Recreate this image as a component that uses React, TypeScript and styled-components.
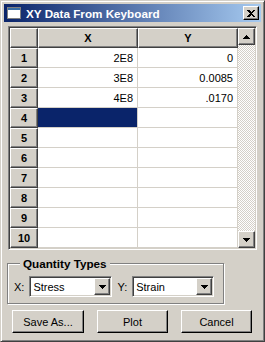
import React from 'react';
import styled, { createGlobalStyle, css } from 'styled-components';

const FACE = '#d4d0c8';
const SHADOW = '#808080';
const DARK = '#404040';
const NAVY = '#0a246a';

const Global = createGlobalStyle`
  html, body { margin: 0; padding: 0; background: ${FACE}; }
  body { font-family: "Liberation Sans", Arial, sans-serif; font-size: 11px; color: #000; }
  * { box-sizing: border-box; }
`;

const raised = (outer: string) => css`
  background: ${FACE};
  border: 1px solid;
  border-color: #fff ${outer} ${outer} #fff;
  box-shadow: inset -1px -1px ${SHADOW};
`;

const sunken = css`
  border: 1px solid;
  border-color: ${SHADOW} #fff #fff ${SHADOW};
  box-shadow: inset 1px 1px ${DARK}, inset -1px -1px ${FACE};
  padding: 1px;
`;

const Window = styled.div`
  width: 265px;
  height: 342px;
  background: ${FACE};
  border: 1px solid;
  border-color: ${FACE} ${DARK} ${DARK} ${FACE};
  box-shadow: inset 1px 1px #fff, inset -1px -1px ${SHADOW};
  padding: 3px;
  display: flex;
  flex-direction: column;
`;

const TitleBar = styled.div`
  height: 18px;
  flex: none;
  display: flex;
  align-items: center;
  padding: 0 2px;
  background: linear-gradient(to right, ${NAVY}, #a6caf0);
  color: #fff;
  font-weight: bold;
  font-size: 11.7px;
`;

const TitleText = styled.span`
  margin-left: 4px;
  white-space: nowrap;
`;

const CloseButton = styled.div`
  ${raised('#000')};
  margin-left: auto;
  width: 16px;
  height: 14px;
  display: flex;
  align-items: center;
  justify-content: center;
`;

const Body = styled.div`
  flex: 1;
  display: flex;
  flex-direction: column;
  padding: 4px 4px 0 4px;
`;

const GridFrame = styled.div`
  ${sunken};
  height: 224px;
  display: flex;
`;

const Table = styled.div`
  display: grid;
  grid-template-columns: 28px 100px 100px;
  grid-auto-rows: 20px;
  flex: none;
`;

const HeaderCell = styled.div`
  ${raised(DARK)};
  display: flex;
  align-items: center;
  justify-content: center;
  font-weight: bold;
`;

const Cell = styled.div<{ $selected?: boolean }>`
  background: ${(p) => (p.$selected ? NAVY : '#fff')};
  border-right: 1px solid ${FACE};
  border-bottom: 1px solid ${FACE};
  display: flex;
  align-items: center;
  justify-content: flex-end;
  padding-right: 4px;
`;

const ScrollBar = styled.div`
  width: 17px;
  flex: none;
  display: flex;
  flex-direction: column;
  justify-content: space-between;
  background: repeating-conic-gradient(#fff 0 25%, ${FACE} 0 50%) 0 0 / 2px 2px;
`;

const ArrowButton = styled.div`
  ${raised(DARK)};
  height: 17px;
  display: flex;
  align-items: center;
  justify-content: center;
`;

const GroupBox = styled.fieldset`
  margin: 7px 0 0 -1px;
  width: 217px;
  height: 47px;
  padding: 0 4px 0 5px;
  border: 1px solid ${SHADOW};
  box-shadow: inset 1px 1px #fff, 1px 1px #fff;
  display: flex;
  align-items: center;
`;

const Legend = styled.legend`
  margin-left: 7px;
  padding: 0 3px;
  background: ${FACE};
  font-weight: bold;
  font-size: 11.7px;
  line-height: 13px;
`;

const FieldRow = styled.div`
  display: flex;
  align-items: center;
  margin-top: 6px;
`;

const FieldLabel = styled.span<{ $gap: number }>`
  margin-left: ${(p) => p.$gap}px;
  margin-right: 5px;
`;

const Combo = styled.div<{ $w: number }>`
  ${sunken};
  width: ${(p) => p.$w}px;
  height: 21px;
  background: #fff;
  display: flex;
  align-items: center;
`;

const ComboText = styled.span`
  flex: 1;
  padding-left: 2px;
`;

const ComboButton = styled.div`
  ${raised(DARK)};
  width: 16px;
  height: 17px;
  display: flex;
  align-items: center;
  justify-content: center;
`;

const ButtonRow = styled.div`
  display: flex;
  justify-content: space-between;
  padding: 0 5px 0 4px;
  margin-top: 6px;
`;

const PushButton = styled.div<{ $w: number }>`
  ${raised('#000')};
  width: ${(p) => p.$w}px;
  height: 23px;
  display: flex;
  align-items: center;
  justify-content: center;
`;

const DownTri = () => (
  <svg width="7" height="4" viewBox="0 0 7 4">
    <path d="M0 0h7L3.5 4z" fill="#000" shapeRendering="crispEdges" />
  </svg>
);
const UpTri = () => (
  <svg width="7" height="4" viewBox="0 0 7 4">
    <path d="M0 4h7L3.5 0z" fill="#000" shapeRendering="crispEdges" />
  </svg>
);

const WinIcon = () => (
  <svg width="16" height="14" viewBox="0 0 16 14">
    <rect x="1.5" y="1.5" width="13" height="11" fill="#fff" stroke="#808080" />
    <rect x="2" y="2" width="12" height="2" fill="#3a6ea5" />
  </svg>
);

const CloseGlyph = () => (
  <svg width="8" height="7" viewBox="0 0 8 7">
    <path d="M0 0h2l2 2 2-2h2L5 3.5 8 7H6L4 5 2 7H0l3-3.5z" fill="#000" shapeRendering="crispEdges" />
  </svg>
);

const rows: [string, string][] = [
  ['2E8', '0'],
  ['3E8', '0.0085'],
  ['4E8', '.0170'],
  ['', ''],
  ['', ''],
  ['', ''],
  ['', ''],
  ['', ''],
  ['', ''],
  ['', ''],
];

export default function App() {
  return (
    <>
      <Global />
      <Window>
        <TitleBar>
          <WinIcon />
          <TitleText>XY Data From Keyboard</TitleText>
          <CloseButton>
            <CloseGlyph />
          </CloseButton>
        </TitleBar>
        <Body>
          <GridFrame>
            <Table>
              <HeaderCell />
              <HeaderCell>X</HeaderCell>
              <HeaderCell>Y</HeaderCell>
              {rows.map((r, i) => (
                <React.Fragment key={i}>
                  <HeaderCell>{i + 1}</HeaderCell>
                  <Cell $selected={i === 3}>{r[0]}</Cell>
                  <Cell>{r[1]}</Cell>
                </React.Fragment>
              ))}
            </Table>
            <ScrollBar>
              <ArrowButton>
                <UpTri />
              </ArrowButton>
              <ArrowButton>
                <DownTri />
              </ArrowButton>
            </ScrollBar>
          </GridFrame>
          <GroupBox>
            <Legend>Quantity Types</Legend>
            <FieldRow>
              <FieldLabel $gap={1}>X:</FieldLabel>
              <Combo $w={83}>
                <ComboText>Stress</ComboText>
                <ComboButton>
                  <DownTri />
                </ComboButton>
              </Combo>
              <FieldLabel $gap={5}>Y:</FieldLabel>
              <Combo $w={82}>
                <ComboText>Strain</ComboText>
                <ComboButton>
                  <DownTri />
                </ComboButton>
              </Combo>
            </FieldRow>
          </GroupBox>
          <ButtonRow>
            <PushButton $w={72}>Save As...</PushButton>
            <PushButton $w={71}>Plot</PushButton>
            <PushButton $w={71}>Cancel</PushButton>
          </ButtonRow>
        </Body>
      </Window>
    </>
  );
}
